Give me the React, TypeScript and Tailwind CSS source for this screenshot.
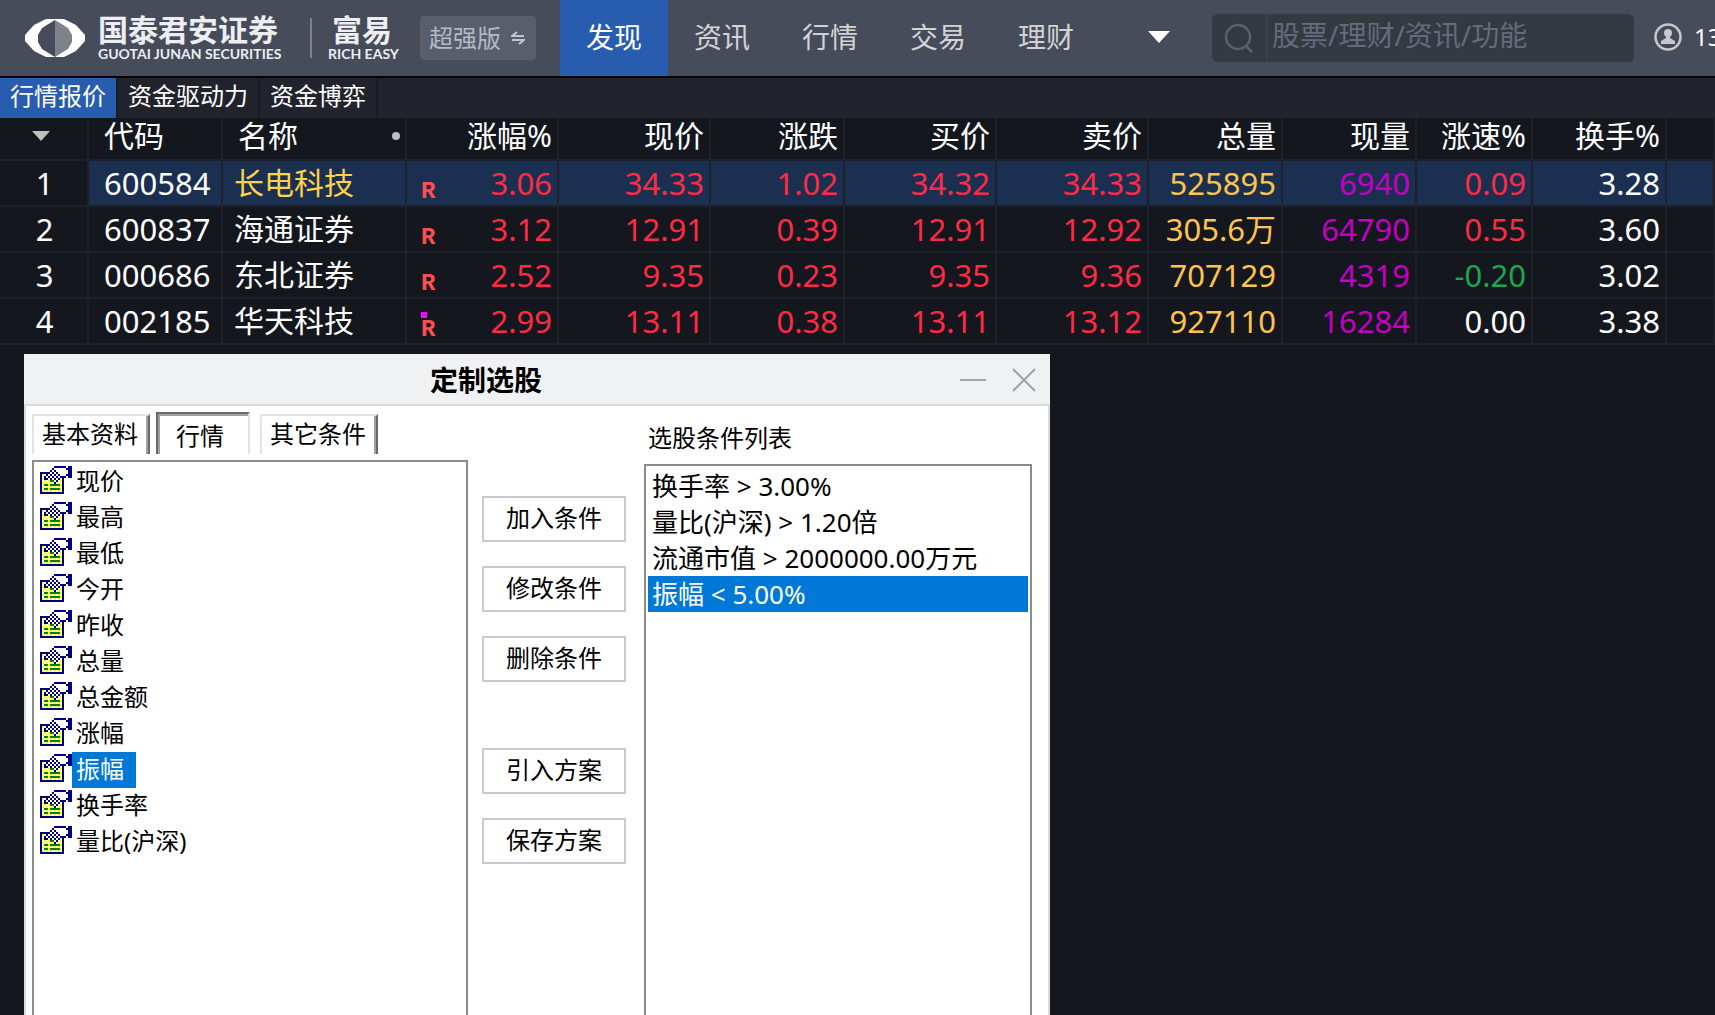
import { clsx } from "clsx";

type Stock = {
  code: string;
  name: string;
  marked?: boolean;
  values: string[];
  speedClass: string;
};

const topNav = ["发现", "资讯", "行情", "交易", "理财"];
const subTabs = ["行情报价", "资金驱动力", "资金博弈"];
const valueHeads = ["涨幅%", "现价", "涨跌", "买价", "卖价", "总量", "现量", "涨速%", "换手%"];

const stocks: Stock[] = [
  { code: "600584", name: "长电科技", values: ["3.06", "34.33", "1.02", "34.32", "34.33", "525895", "6940", "0.09", "3.28"], speedClass: "text-[#ff2a44]" },
  { code: "600837", name: "海通证券", values: ["3.12", "12.91", "0.39", "12.91", "12.92", "305.6万", "64790", "0.55", "3.60"], speedClass: "text-[#ff2a44]" },
  { code: "000686", name: "东北证券", values: ["2.52", "9.35", "0.23", "9.35", "9.36", "707129", "4319", "-0.20", "3.02"], speedClass: "text-[#1ba84c]" },
  { code: "002185", name: "华天科技", marked: true, values: ["2.99", "13.11", "0.38", "13.11", "13.12", "927110", "16284", "0.00", "3.38"], speedClass: "text-white" },
];

const fields = ["现价", "最高", "最低", "今开", "昨收", "总量", "总金额", "涨幅", "振幅", "换手率", "量比(沪深)"];
const conditions = ["换手率 > 3.00%", "量比(沪深) > 1.20倍", "流通市值 > 2000000.00万元", "振幅 < 5.00%"];

function valueClass(index: number, stock: Stock) {
  if (index < 5) return "text-[#ff2a44]";
  if (index === 5) return "text-[#ffc44d]";
  if (index === 6) return "text-[#c400c4]";
  if (index === 7) return stock.speedClass;
  return "text-white";
}

// B navy, Y yellow, G green, W white
const iconRows = [
  ".......BBBBBB.BB",
  "......BWWWWWWBBB",
  ".....BWBWWWWWWBB",
  "BBBBBWBWBWWWWWBB",
  "BYWBWBWBWBWWWBBB",
  "BWBWBWBWBWBBB.BB",
  "BYBBWBWBWBWB....",
  "BWYWYGGWBWYB....",
  "BYWYWYWBWYWB....",
  "BWGGYGGGGGYB....",
  "BYWYWYWYWYWB....",
  "BWGGYGGGGGYB....",
  "BYWYWYWYWYWB....",
  "BBBBBBBBBBBB....",
];
const iconColors: Record<string, string> = { B: "#000080", Y: "#ffff00", G: "#008000", W: "#ffffff" };

function FieldIcon() {
  return (
    <svg viewBox="0 0 16 14" className="mb-1 h-7 w-8 shrink-0" shapeRendering="crispEdges" aria-hidden="true">
      {iconRows.map((row, y) =>
        row.split("").map((c, x) =>
          c === "." ? null : <rect key={`${x}-${y}`} x={x} y={y} width="1" height="1" fill={iconColors[c]} />
        )
      )}
    </svg>
  );
}

function Header() {
  return (
    <header className="flex h-[78px] shrink-0 items-stretch overflow-hidden border-b-2 border-black bg-[#464c59]">
      {/* Brand */}
      <div className="flex w-[560px] shrink-0 items-center pl-6">
        <svg viewBox="0 0 62 40" className="h-10 w-[62px] shrink-0" aria-hidden="true">
          <path d="M22 1H40L52 7L61 17V23L52 33L40 39H22L10 33L1 23V17L10 7Z" fill="#fff" />
          <path d="M31 2L18 10L14 17V24L18 31L31 39Z" fill="#464c59" />
          <path d="M31 2L44 10L48 17V24L44 31L31 39Z" fill="#7e828b" />
        </svg>
        <div className="ml-3 flex w-[212px] flex-col text-[#eceef1]">
          <span className="text-[30px] leading-8 font-bold">国泰君安证券</span>
          <span className="font-['Lato'] text-[14px] leading-4 font-bold whitespace-nowrap">GUOTAI JUNAN SECURITIES</span>
        </div>
        <div className="h-10 w-[2px] bg-[#7c818b]" />
        <div className="ml-4 flex w-[92px] flex-col text-[#eceef1]">
          <span className="pl-1 text-[30px] leading-8 font-bold">富易</span>
          <span className="font-['Lato'] text-[14px] leading-4 font-bold whitespace-nowrap">RICH EASY</span>
        </div>
        <button className="flex h-11 w-[116px] items-center gap-[10px] rounded bg-[#585e6a] pl-[9px] text-[24px] leading-8 text-[#b4bac6]">
          超强版
          <svg viewBox="0 0 14 14" className="h-[14px] w-[14px]" fill="none" stroke="#c0c5d0" strokeWidth="2" aria-hidden="true">
            <path d="M13 5H1L6 1M1 9H13L8 13" />
          </svg>
        </button>
      </div>

      {/* Navigation */}
      <nav className="flex shrink-0">
        {topNav.map((item, i) => (
          <a
            key={item}
            href="#"
            className={clsx(
              "flex w-[108px] items-center justify-center pb-[2px] text-[28px] leading-9",
              i === 0 ? "bg-[#285cae] text-white" : "text-[#d2d3d5]"
            )}
          >
            {item}
          </a>
        ))}
      </nav>
      <button aria-label="更多" className="flex w-[112px] shrink-0 items-center justify-center pb-[2px]">
        <svg viewBox="0 0 22 12" className="ml-[6px] h-3 w-[22px]" aria-hidden="true">
          <path d="M0 0H22L11 12Z" fill="#fff" />
        </svg>
      </button>

      {/* Search */}
      <div className="mt-[14px] flex h-12 min-w-0 flex-1 items-center rounded-md bg-[#343942]">
        <svg viewBox="0 0 30 30" className="mx-3 h-[30px] w-[30px] shrink-0" fill="none" stroke="#596070" strokeWidth="2.5" aria-hidden="true">
          <circle cx="14" cy="14" r="12" />
          <path d="M22 23L28 29" />
        </svg>
        <input
          type="text"
          aria-label="搜索"
          placeholder="股票/理财/资讯/功能"
          className="h-full w-full min-w-0 border-l-2 border-[#3b404a] pl-1 pb-[6px] text-[28px] text-white outline-none placeholder:text-[#646b7b]"
        />
      </div>

      {/* Account */}
      <a href="#" className="flex w-[81px] shrink-0 items-center gap-3 overflow-hidden pb-[2px] pl-5 text-[24px] leading-8 text-white">
        <svg viewBox="0 0 28 28" className="h-7 w-7 shrink-0" aria-hidden="true">
          <circle cx="14" cy="14" r="12.5" fill="none" stroke="#c6c8cc" strokeWidth="2.5" />
          <circle cx="14" cy="10" r="4" fill="#c6c8cc" />
          <path d="M12 12H16V15L21 18V21H7V18L12 15Z" fill="#c6c8cc" />
        </svg>
        13
      </a>
    </header>
  );
}

function QuoteTable() {
  return (
    <table className="w-full table-fixed border-collapse text-[31px] leading-[42px] text-white">
      <colgroup>
        <col className="w-[88px]" />
        <col className="w-[134px]" />
        <col className="w-[184px]" />
        <col className="w-[152px]" />
        <col className="w-[152px]" />
        <col className="w-[134px]" />
        <col className="w-[152px]" />
        <col className="w-[152px]" />
        <col className="w-[134px]" />
        <col className="w-[134px]" />
        <col className="w-[116px]" />
        <col className="w-[134px]" />
        <col />
      </colgroup>
      <thead>
        <tr className="h-[42px] border-b-2 border-[#1f2129] text-[30px] leading-[36px] *:border-r-2 *:border-[#1f2129] *:p-0 *:pb-[5px] *:font-normal">
          <th>
            <button aria-label="排序" className="block w-full pl-8">
              <svg viewBox="0 0 18 10" className="h-[10px] w-[18px]" aria-hidden="true">
                <path d="M0 0H18L9 10Z" fill="#c0c0c0" />
              </svg>
            </button>
          </th>
          <th className="text-left"><span className="pl-[15px]">代码</span></th>
          <th>
            <div className="flex items-center justify-between pl-[15px] pr-[5px]">
              名称
              <span className="h-2 w-2 rounded-full bg-[#c0c0c0]" />
            </div>
          </th>
          {valueHeads.map((head) => (
            <th key={head} className="text-right"><span className="pr-[5px]">{head}</span></th>
          ))}
          <th />
        </tr>
      </thead>
      <tbody>
        {stocks.map((stock, row) => (
          <tr key={stock.code} className="h-[46px] border-b-2 border-[#1f2129] *:border-r-2 *:border-[#1f2129]">
            <td className="p-0 pl-[2px] text-center">{row + 1}</td>
            <td className={clsx("p-0 pl-[15px]", row === 0 && "bg-[#1b3050]")}>{stock.code}</td>
            <td className={clsx("p-0 pl-[11px] text-[30px]", row === 0 && "bg-[#1b3050] text-[#ffd24a]")}>{stock.name}</td>
            {stock.values.map((value, i) => (
              <td
                key={i}
                className={clsx("p-0 pr-[5px] text-right", valueClass(i, stock), row === 0 && "bg-[#1b3050]")}
              >
                {i === 0 ? (
                  <div className="flex items-center justify-between pl-[14px]">
                    <span className="flex h-[42px] flex-col justify-end font-['Liberation_Mono'] text-[24px] leading-6 font-bold text-[#ff5050]">
                      {stock.marked && <span className="h-[6px] w-[6px] bg-[#ff00ff]" />}
                      R
                    </span>
                    {value}
                  </div>
                ) : (
                  value
                )}
              </td>
            ))}
            <td className={clsx("p-0", row === 0 && "bg-[#1b3050]")} />
          </tr>
        ))}
      </tbody>
    </table>
  );
}

function PlainButton({ children }: { children: string }) {
  return (
    <button className="h-[46px] w-full border-2 border-[#c8cacf] bg-white pb-[2px] text-[24px] leading-8">{children}</button>
  );
}

function PickerDialog() {
  return (
    <section role="dialog" aria-labelledby="picker-title" className="mt-[9px] ml-6 flex w-full max-w-[1026px] flex-1 flex-col bg-white text-black">
      <div className="flex h-[52px] shrink-0 items-center border-b-2 border-[#d9dae0] bg-[#f0f1f3] pt-[2px]">
        <h2 id="picker-title" className="flex-1 text-center text-[28px] leading-9 font-bold">定制选股</h2>
        <button aria-label="最小化" className="flex w-[50px] justify-center">
          <svg viewBox="0 0 26 24" className="h-6 w-[26px]" stroke="#a3a3a3" strokeWidth="2" aria-hidden="true">
            <path d="M0 12H26" />
          </svg>
        </button>
        <button aria-label="关闭" className="flex w-[52px] justify-center">
          <svg viewBox="0 0 24 24" className="h-6 w-6" stroke="#a3a3a3" strokeWidth="2" aria-hidden="true">
            <path d="M1 1L23 23M23 1L1 23" />
          </svg>
        </button>
      </div>

      <div className="flex flex-1 border-x-2 border-[#d9dade] pt-[6px] pr-4 pl-[6px]">
        {/* Field tree */}
        <div className="flex min-w-0 flex-1 flex-col">
          <div role="tablist" className="flex h-[42px] items-end text-[24px] leading-8">
            <button role="tab" aria-selected="false" className="h-10 w-[118px] border-t-2 border-r-2 border-l-2 border-t-[#e3e3e3] border-r-[#696969] border-l-[#e3e3e3] pr-[2px] pb-[2px] shadow-[inset_-2px_0_0_#a0a0a0]">
              基本资料
            </button>
            <button role="tab" aria-selected="true" className="ml-[6px] h-[42px] w-[94px] border-t-2 border-r-2 border-l-2 border-t-[#696969] border-r-[#e3e3e3] border-l-[#696969] pt-1 pr-[6px] shadow-[inset_2px_2px_0_#a0a0a0]">
              行情
            </button>
            <button role="tab" aria-selected="false" className="ml-[10px] h-10 w-[118px] border-t-2 border-r-2 border-l-2 border-t-[#e3e3e3] border-r-[#696969] border-l-[#e3e3e3] pr-[2px] pb-[2px] shadow-[inset_-2px_0_0_#a0a0a0]">
              其它条件
            </button>
          </div>
          <ul className="mt-[6px] flex-1 border-2 border-b-0 border-[#8c8c8c] pt-[2px] pl-[6px] text-[24px] leading-8">
            {fields.map((field) => (
              <li key={field} className="flex h-9 items-center">
                <FieldIcon />
                <button className={clsx("h-9 pb-[2px] pl-1", field === "振幅" && "bg-[#0078d7] pr-3 text-white")}>{field}</button>
              </li>
            ))}
          </ul>
        </div>

        {/* Actions */}
        <div className="mr-[18px] ml-[14px] flex w-36 shrink-0 flex-col gap-6 pt-[84px]">
          <PlainButton>加入条件</PlainButton>
          <PlainButton>修改条件</PlainButton>
          <PlainButton>删除条件</PlainButton>
          <div className="h-[18px]" />
          <PlainButton>引入方案</PlainButton>
          <PlainButton>保存方案</PlainButton>
        </div>

        {/* Conditions */}
        <div className="flex w-[388px] shrink-0 flex-col">
          <h3 id="conditions-title" className="h-[52px] pt-[10px] pl-1 text-[24px] leading-8">选股条件列表</h3>
          <ul aria-labelledby="conditions-title" className="flex-1 border-2 border-b-0 border-[#8c8c8c] p-[2px] text-[26px] leading-9">
            {conditions.map((condition, i) => (
              <li key={condition} className={clsx("h-9 pl-1 whitespace-nowrap", i === 3 && "bg-[#0078d7] text-white")}>
                {condition}
              </li>
            ))}
          </ul>
        </div>
      </div>
    </section>
  );
}

export default function App() {
  return (
    <div className="flex min-h-screen flex-col bg-[#14171e] font-['Noto_Sans','Noto_Sans_CJK_SC',sans-serif]">
      <Header />
      <div className="flex h-10 shrink-0 bg-[#21242d]">
        {subTabs.map((tab, i) => (
          <button
            key={tab}
            className={clsx(
              "border-r-2 border-[#191b22] px-[10px] pb-1 text-[24px] leading-8 text-white",
              i === 0 && "bg-[#285cae]"
            )}
          >
            {tab}
          </button>
        ))}
      </div>
      <QuoteTable />
      <PickerDialog />
    </div>
  );
}
